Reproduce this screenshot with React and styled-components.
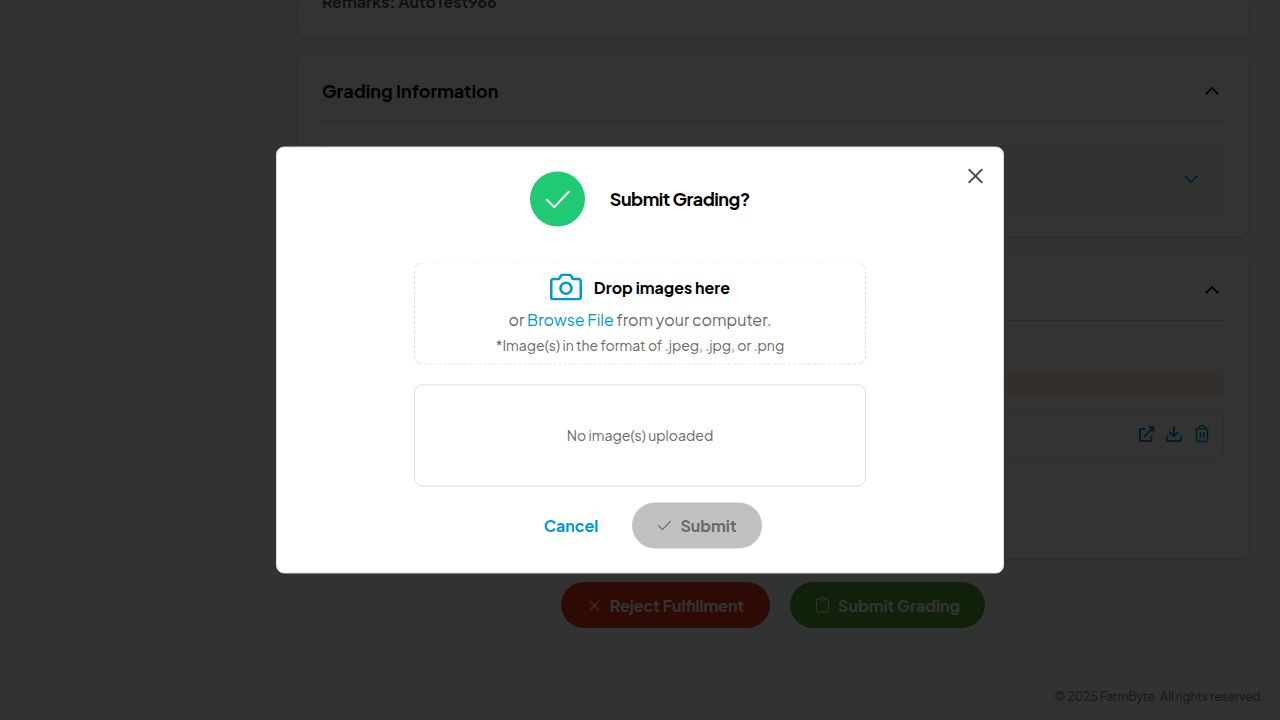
import React from 'react';
import styled, { createGlobalStyle } from 'styled-components';

const GlobalStyle = createGlobalStyle`
  *, *::before, *::after { box-sizing: border-box; }
  body {
    margin: 0;
    overflow: hidden;
    background: #f4fbf7;
    font-family: "Plus Jakarta Sans", Inter, sans-serif;
    color: #000;
  }
  button { font-family: inherit; border: 0; padding: 0; background: none; }
  svg { display: block; flex: none; }
`;

const BLUE = '#0098d0';

const Page = styled.div`
  width: 1280px;
  height: 720px;
  overflow: hidden;
  padding-left: 298px;
  display: flex;
  flex-direction: column;
`;

const Cards = styled.main`
  width: 950px;
  display: flex;
  flex-direction: column;
  gap: 16px;
`;

const Card = styled.section`
  height: ${(p) => p.$height}px;
  padding: ${(p) => (p.$cut ? '0 24px' : '24px')};
  background: #fff;
  border-radius: ${(p) => (p.$cut ? '0 0 8px 8px' : '8px')};
  box-shadow: 0 2px 4px rgba(0, 0, 0, 0.14);
`;

const Text = styled.span`
  font-size: ${(p) => p.$size || 16}px;
  font-weight: ${(p) => p.$weight || 400};
  line-height: ${(p) => p.$line || 24}px;
  letter-spacing: ${(p) => p.$track || 0}px;
  color: ${(p) => p.$color || 'inherit'};
  white-space: nowrap;
`;

const Remarks = styled.div`
  margin-top: -10px;
  display: flex;
`;

const CardHeader = styled.header`
  height: 45px;
  padding: 0 5px 16px 0;
  display: flex;
  align-items: center;
  justify-content: space-between;
  border-bottom: 1px solid #cfcfcf;
`;

const Panel = styled.div`
  height: 66px;
  margin-top: 24px;
  padding: 0 25px;
  display: flex;
  align-items: center;
  justify-content: flex-end;
  background: #fafafa;
  border: 1px solid #e4e4e4;
  border-radius: 8px;
`;

const Notice = styled.div`
  height: 24px;
  margin-top: 52px;
  border-radius: 6px;
  background: #ffeed8;
`;

const FileRow = styled.div`
  height: 49px;
  margin-top: 12px;
  padding: 0 12px;
  display: flex;
  align-items: center;
  justify-content: flex-end;
  gap: 10px;
  border: 1px solid #e4e4e4;
  border-radius: 8px;
`;

const PageActions = styled.div`
  width: 950px;
  margin-top: 24px;
  display: flex;
  justify-content: center;
  gap: 20px;

  ${Text} { margin-top: 1px; }
`;

const Pill = styled.button`
  width: ${(p) => p.$width}px;
  height: 46px;
  padding-left: ${(p) => p.$inset || 0}px;
  border-radius: 23px;
  display: flex;
  align-items: center;
  justify-content: center;
  gap: ${(p) => p.$gap || 8}px;
  background: ${(p) => p.$bg || 'transparent'};
  color: ${(p) => p.$color};
`;

const Footer = styled.footer`
  margin: auto 16px 11px 0;
  display: flex;
  justify-content: flex-end;
`;

const Overlay = styled.div`
  position: fixed;
  inset: 0;
  background: rgba(0, 0, 0, 0.8);
`;

const Modal = styled.div`
  position: absolute;
  top: 50%;
  left: 50%;
  transform: translate(-50%, -50%);
  width: 728px;
  height: 427px;
  padding: 24px;
  display: flex;
  flex-direction: column;
  align-items: center;
  background: #fff;
  border: 1px solid #dedede;
  border-radius: 8px;
`;

const CloseButton = styled.button`
  position: absolute;
  top: 20.5px;
  right: 20.5px;
  color: #484848;
`;

const ModalTitle = styled.div`
  display: flex;
  align-items: center;
  gap: 24.5px;

  ${Text} { margin-top: -2px; }
`;

const Badge = styled.div`
  width: 55px;
  height: 55px;
  border-radius: 50%;
  display: flex;
  align-items: center;
  justify-content: center;
  background: #20c974;
  color: #fff;
`;

const DropZone = styled.div`
  width: 452px;
  height: 102px;
  margin-top: 36px;
  padding-top: 7px;
  display: flex;
  flex-direction: column;
  align-items: center;
  border: 1px dashed #dedede;
  border-radius: 8px;
`;

const DropTitle = styled.div`
  height: 34px;
  display: flex;
  align-items: center;
  gap: 12px;

  svg { margin-top: -1px; }
`;

const UploadList = styled.div`
  width: 452px;
  height: 102px;
  margin-top: 20px;
  padding-bottom: 2px;
  display: flex;
  align-items: center;
  justify-content: center;
  border: 1px solid #dedede;
  border-radius: 8px;
`;

const ModalActions = styled.div`
  margin-top: 16px;
  display: flex;
  gap: 8px;
`;

const BrowseLink = styled.span`
  color: ${BLUE};
`;

const Chevron = ({ down, color }) => (
  <svg width="14" height="8" viewBox="0 0 14 8" fill="none" stroke={color} strokeWidth="1.75">
    <path d={down ? 'M.7.7 7 7 13.3.7' : 'M.7 7.3 7 1l6.3 6.3'} />
  </svg>
);

const Check = ({ width, height, stroke }) => (
  <svg width={width} height={height} viewBox="0 0 24 18" fill="none" stroke="currentColor" strokeWidth={stroke}>
    <path d="M1 9.5 8.3 16.6 23 1" strokeLinecap="round" strokeLinejoin="round" />
  </svg>
);

const Cross = ({ size, stroke }) => (
  <svg width={size} height={size} viewBox={`0 0 ${size} ${size}`} fill="none" stroke="currentColor" strokeWidth={stroke}>
    <path d={`M.7.7 ${size - 0.7} ${size - 0.7}M${size - 0.7} .7.7 ${size - 0.7}`} />
  </svg>
);

const Clipboard = () => (
  <svg width="13" height="16" viewBox="0 0 13 16" fill="none" stroke="currentColor">
    <path d="M3.5 2H2A1.5 1.5 0 0 0 .5 3.5v10A1.5 1.5 0 0 0 2 15h9a1.5 1.5 0 0 0 1.5-1.5v-10A1.5 1.5 0 0 0 11 2H9.5" />
    <path d="M3.5 3V1.5a1 1 0 0 1 1-1h4a1 1 0 0 1 1 1V3z" />
  </svg>
);

const Camera = () => (
  <svg width="32" height="27" viewBox="0 0 32 27" fill="none" stroke={BLUE} strokeWidth="2.6" strokeLinejoin="round">
    <path d="M3.5 5.5h5.7l1.5-2.9a2.4 2.4 0 0 1 2.1-1.3h6.4a2.4 2.4 0 0 1 2.1 1.3l1.5 2.9h5.7a2.3 2.3 0 0 1 2.3 2.3v15.6a2.3 2.3 0 0 1-2.3 2.3h-25a2.3 2.3 0 0 1-2.3-2.3V7.8a2.3 2.3 0 0 1 2.3-2.3z" />
    <circle cx="16" cy="14.7" r="5.5" />
  </svg>
);

const OpenIcon = () => (
  <svg width="18" height="18" viewBox="0 0 18 18" fill="none" stroke={BLUE} strokeWidth="2">
    <path d="M8.5 4H3.5a.5.5 0 0 0-.5.5v11a.5.5 0 0 0 .5.5h10.500a.5.5 0 0 0 .5-.5V10.500M7 12l8.500-8.500" />
    <path d="M10.500 1H17.500v7z" fill={BLUE} stroke="none" />
  </svg>
);

const DownloadIcon = () => (
  <svg width="18" height="18" viewBox="0 0 18 18" fill="none" stroke={BLUE} strokeWidth="2">
    <path d="M9 1v10M4.5 7 9 11.3 13.5 7M2 11.500v3.500a1 1 0 0 0 1 1h12a1 1 0 0 0 1-1v-3.500" />
  </svg>
);

const TrashIcon = () => (
  <svg width="18" height="18" viewBox="0 0 18 18" fill="none" stroke={BLUE} strokeWidth="1.6">
    <path d="M2 4h14M5.5 4l1-2.5a1 1 0 0 1 .9-.7h3.2a1 1 0 0 1 .9.7l1 2.5M3.6 4v11a1.5 1.5 0 0 0 1.5 1.500h7.800a1.500 1.500 0 0 0 1.500-1.500V4M7.300 7.200v5.800M10.700 7.200v5.800" />
  </svg>
);

export default function App() {
  return (
    <>
      <GlobalStyle />
      <Page>
        <Cards>
          <Card $height={37} $cut>
            <Remarks>
              <Text $weight={700} $color="#555">Remarks: AutoTest966</Text>
            </Remarks>
          </Card>
          <Card $height={183}>
            <CardHeader>
              <Text $size={18} $weight={700} $line={28}>Grading Information</Text>
              <Chevron color="#000" />
            </CardHeader>
            <Panel>
              <Chevron down color={BLUE} />
            </Panel>
          </Card>
          <Card $height={306}>
            <CardHeader>
              <span />
              <Chevron color="#000" />
            </CardHeader>
            <Notice />
            <FileRow>
              <OpenIcon />
              <DownloadIcon />
              <TrashIcon />
            </FileRow>
          </Card>
        </Cards>
        <PageActions>
          <Pill $width={209} $bg="#e7351c" $color="#fff" $gap={10} $inset={2}>
            <Cross size={11} stroke={1.2} />
            <Text $weight={700}>Reject Fulfillment</Text>
          </Pill>
          <Pill $width={195} $bg="#55a630" $color="#fff" $gap={9} $inset={1}>
            <Clipboard />
            <Text $weight={700}>Submit Grading</Text>
          </Pill>
        </PageActions>
        <Footer>
          <Text $size={12} $color="#6c757d">© 2025 FarmByte. All rights reserved.</Text>
        </Footer>
      </Page>
      <Overlay>
        <Modal role="dialog">
          <CloseButton aria-label="Close">
            <Cross size={15} stroke={1.9} />
          </CloseButton>
          <ModalTitle>
            <Badge>
              <Check width={24} height={18} stroke={2} />
            </Badge>
            <Text $size={18} $weight={700} $track={-0.5}>Submit Grading?</Text>
          </ModalTitle>
          <DropZone>
            <DropTitle>
              <Camera />
              <Text $weight={700}>Drop images here</Text>
            </DropTitle>
            <Text $line={30} $color="#696969">
              or <BrowseLink>Browse File</BrowseLink> from your computer.
            </Text>
            <Text $size={14} $line={20} $color="#696969">*Image(s) in the format of .jpeg, .jpg, or .png</Text>
          </DropZone>
          <UploadList>
            <Text $size={14} $color="#696969">No image(s) uploaded</Text>
          </UploadList>
          <ModalActions>
            <Pill $width={105} $color={BLUE}>
              <Text $weight={700}>Cancel</Text>
            </Pill>
            <Pill $width={130} $bg="#c1c1c1" $color="#696969" $gap={9} $inset={2}>
              <Check width={13} height={10} stroke={2.2} />
              <Text $weight={700}>Submit</Text>
            </Pill>
          </ModalActions>
        </Modal>
      </Overlay>
    </>
  );
}
